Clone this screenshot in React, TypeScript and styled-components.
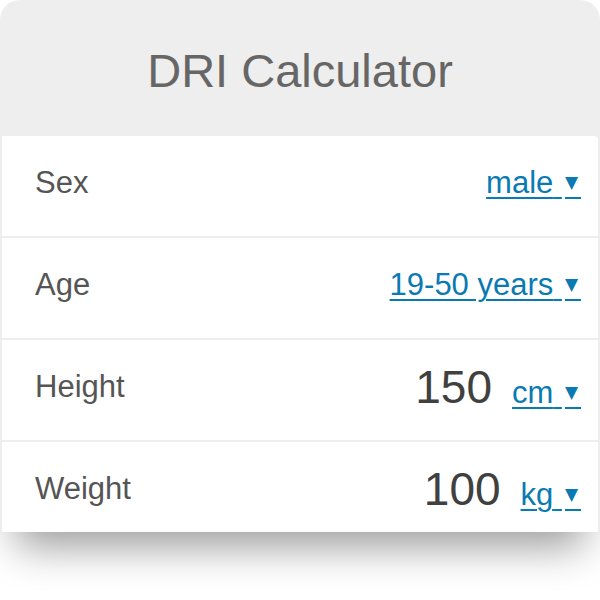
import React from "react";
import styled, { createGlobalStyle } from "styled-components";

const Global = createGlobalStyle`
  html, body { margin: 0; padding: 0; background: #ffffff; }
  body { font-family: "Liberation Sans", Arial, sans-serif; }
`;

const Page = styled.div`
  width: 600px;
  height: 600px;
  overflow: hidden;
  background: #ffffff;
`;

const Card = styled.div`
  width: 600px;
  height: 532px;
  box-sizing: border-box;
  padding: 0 2px;
  background: #eeeeee;
  border-radius: 20px 20px 0 0;
  overflow: hidden;
  display: flex;
  flex-direction: column;
  box-shadow: 0 30px 42px -16px rgba(0, 0, 0, 0.4);
`;

const Header = styled.div`
  height: 136px;
  flex: none;
  display: flex;
  align-items: center;
  justify-content: center;
`;

const Title = styled.h1`
  margin: 0;
  padding-top: 4px;
  font-weight: 400;
  font-size: 47px;
  color: #666666;
`;

const Rows = styled.div`
  display: flex;
  flex-direction: column;
  gap: 2px;
  border-radius: 0 4px 0 0;
  overflow: hidden;
`;

const Row = styled.div`
  height: 100px;
  flex: none;
  background: #ffffff;
  box-sizing: border-box;
  padding: 0 17px 0 33px;
  display: flex;
  align-items: center;
  justify-content: space-between;
`;

const Label = styled.span`
  font-size: 31px;
  color: #555555;
  padding-bottom: 6px;
`;

const Right = styled.div`
  display: flex;
  align-items: baseline;
  gap: 20px;
  padding-bottom: 6px;
`;

const Value = styled.span`
  font-size: 46px;
  color: #404040;
`;

const Select = styled.a`
  font-size: 31px;
  color: #0a7ab3;
  text-decoration: underline;
  text-decoration-thickness: 2px;
  text-underline-offset: 4px;
  cursor: pointer;
  white-space: nowrap;
`;

const Arrow = styled.span`
  font-family: "DejaVu Sans", sans-serif;
  font-size: 17px;
  letter-spacing: 3px;
  margin-left: 3px;
  vertical-align: 5px;
`;

type Field = { label: string; value?: string; option: string };

const fields: Field[] = [
  { label: "Sex", option: "male" },
  { label: "Age", option: "19-50 years" },
  { label: "Height", value: "150", option: "cm" },
  { label: "Weight", value: "100", option: "kg" },
];

export default function App() {
  return (
    <Page>
      <Global />
      <Card>
        <Header>
          <Title>DRI Calculator</Title>
        </Header>
        <Rows>
          {fields.map((f) => (
            <Row key={f.label}>
              <Label>{f.label}</Label>
              <Right>
                {f.value && <Value>{f.value}</Value>}
                <Select>
                  {f.option} <Arrow>▼</Arrow>
                </Select>
              </Right>
            </Row>
          ))}
        </Rows>
      </Card>
    </Page>
  );
}
